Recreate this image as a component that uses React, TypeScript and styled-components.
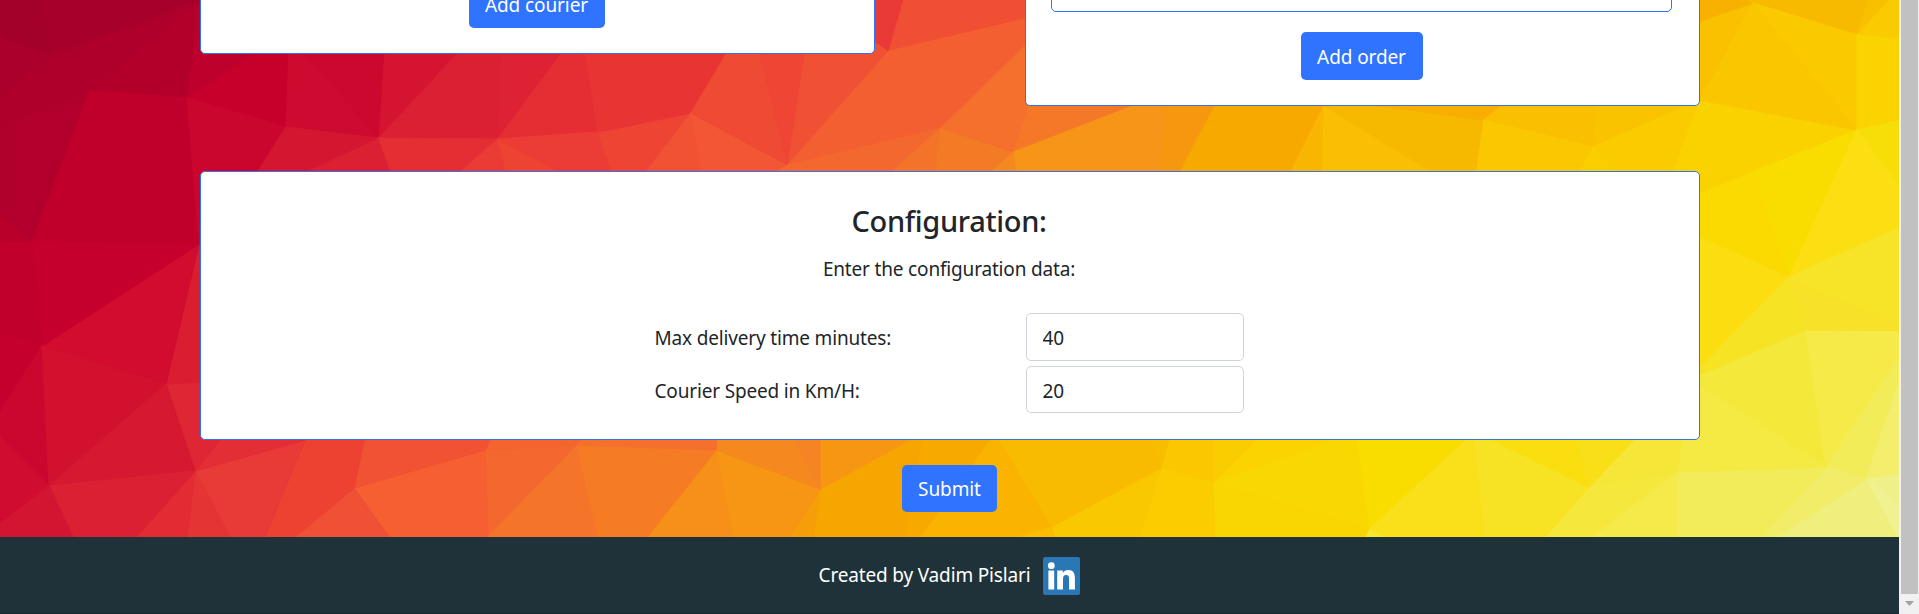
import React from "react";
import styled, { createGlobalStyle } from "styled-components";

const GlobalStyle = createGlobalStyle`
  *, *::before, *::after { box-sizing: border-box; }
  body {
    margin: 0;
    font-family: "Noto Sans", sans-serif;
    font-size: 19px;
    line-height: 30px;
    color: #212529;
    overflow: hidden;
  }
`;

/* Low-poly backdrop: one entry per facet, colour and outline. */
const facets: [string, string][] = [
  ["#a3002a", "0,0 43,0 51,56 0,37"],
  ["#a7002b", "43,0 204,0 200,2 51,56"],
  ["#ab002c", "0,37 51,56 0,97"],
  ["#af002b", "0,97 51,56 200,2 90,91 0,125"],
  ["#b3002b", "90,91 200,2 204,0 194,54 187,98"],
  ["#b0002b", "0,125 90,91 32,242 0,215"],
  ["#b8002b", "0,215 32,242 0,243"],
  ["#c0002b", "90,91 187,98 199,244 32,242"],
  ["#be002c", "187,98 194,54 200,0 340,0 255,54"],
  ["#c6002b", "187,98 255,54 290,30 289,54 286,127"],
  ["#ca062f", "187,98 286,127 259,171 259,250 199,244"],
  ["#cd0a2f", "289,50 306,50 306,54 379,138 286,127"],
  ["#cb082d", "306,50 385,50 379,138 306,54"],
  ["#d51631", "286,127 379,138 304,171 300,176 255,176"],
  ["#dc2033", "379,138 392,176 300,176"],
  ["#d41430", "379,138 385,50 461,50"],
  ["#dc2033", "379,138 461,50 502,50 498,139"],
  ["#de2234", "498,139 502,50 564,50"],
  ["#e42e34", "379,138 498,139 456,176 392,176"],
  ["#e42e34", "498,139 564,50 585,50 598,132"],
  ["#eb3b35", "498,139 507,176 456,176"],
  ["#ed4332", "498,139 507,176 568,176"],
  ["#eb3d35", "498,139 598,132 613,176 568,176"],
  ["#ee4434", "598,132 691,113 643,176 613,176"],
  ["#e83534", "585,50 728.5,50 691,113 598,132"],
  ["#f15234", "691,113 643,176 702,176"],
  ["#f35634", "691,113 702,176 770,176 788,165"],
  ["#ee4a34", "691,113 728.5,50 759,50 788,165"],
  ["#ef4534", "759,50 805.6,50 788,165"],
  ["#f05033", "805.6,50 868,50 868,36 889,51 788,165"],
  ["#ea3a37", "868,36 889,51 904,0 868,0"],
  ["#f04f34", "904,0 1029,0 1029,18 889,51"],
  ["#f45f31", "889,51 1029,18 1029,42 941,128 788,165"],
  ["#f3682e", "788,165 941,128 887,176 770,176"],
  ["#f37329", "941,128 887,176 936,176"],
  ["#f47b26", "941,128 936,176 987,176 1014,152"],
  ["#f4702c", "941,128 1029,42 1029,106 1014,152"],
  ["#f57828", "1014,152 1029,106 1029,96 1159,96"],
  ["#f48a1f", "1014,152 987,176 1018,176"],
  ["#f69518", "1014,152 1159,96 1166,100 1160,176 1018,176"],
  ["#f5980f", "1166,100 1218,100 1178,176 1160,176"],
  ["#f7a900", "1218,100 1324,100 1324,106 1289,176 1178,176"],
  ["#f8b602", "1324,106 1289,176 1323,176"],
  ["#fabf03", "1324,106 1323,176 1439,176"],
  ["#f7b900", "1324,100 1340,100 1484,120 1476,176 1439,176 1324,106"],
  ["#f8ae00", "1378,106 1340,100 1510,100 1484,120"],
  ["#fabf00", "1484,120 1510,100 1597,100 1593,147"],
  ["#fac700", "1484,120 1593,147 1578,176 1476,176"],
  ["#f9c300", "1597,100 1700,100 1593,147"],
  ["#fbce00", "1593,147 1578,176 1621,176"],
  ["#facc00", "1593,147 1621,176 1672,176 1700,100"],
  ["#fad200", "1700,100 1672,176 1695,196 1857,130"],
  ["#f9c100", "1695,23 1753,3 1700,100 1695,100"],
  ["#f8b100", "1695,0 1747,0 1753,3 1695,23"],
  ["#f8ba00", "1747,0 1869,0 1857,35 1753,3"],
  ["#f9c000", "1869,0 1890,0 1857,35"],
  ["#facb00", "1890,0 1899,0 1899,39 1857,35"],
  ["#fac900", "1753,3 1857,35 1857,130"],
  ["#fac600", "1753,3 1857,130 1700,100"],
  ["#fbd300", "1857,35 1899,39 1899,121 1857,130"],
  ["#f8de08", "1857,130 1899,121 1899,186"],
  ["#fada00", "1695,196 1755,171 1789,277 1695,235"],
  ["#f9dd00", "1755,171 1857,130 1789,277"],
  ["#fbdf12", "1857,130 1899,186 1899,228 1789,277"],
  ["#fbdd10", "1695,235 1789,277 1695,373"],
  ["#f6e324", "1789,277 1806,331 1695,378 1695,373"],
  ["#f7e229", "1789,277 1899,323 1899,332 1806,331"],
  ["#f7e429", "1789,277 1899,228 1899,323"],
  ["#f4e83b", "1695,378 1806,331 1826,467 1695,383"],
  ["#f6ea49", "1806,331 1899,332 1899,358 1826,467"],
  ["#f3ec59", "1826,467 1899,358 1899,383 1866,479"],
  ["#f3ee6c", "1899,383 1899,475 1866,479"],
  ["#f0f08b", "1866,479 1899,475 1899,505"],
  ["#f0f191", "1866,479 1899,505 1899,537 1897,537"],
  ["#f0ef7d", "1866,479 1897,537 1777,537"],
  ["#f2ed69", "1826,467 1866,479 1777,537 1762,537"],
  ["#f3ec5a", "1677,472 1826,467 1762,537 1677,537"],
  ["#f5e943", "1695,383 1826,467 1677,472 1682,436"],
  ["#f6e637", "1637,436 1682,436 1677,472 1588,488"],
  ["#f6e73c", "1588,488 1677,472 1593,537 1545,537"],
  ["#f6e94a", "1677,472 1677,537 1593,537"],
  ["#f9df18", "1575,436 1637,436 1588,488"],
  ["#fbde10", "1482,436 1575,436 1588,488"],
  ["#f7e323", "1473,436 1482,436 1588,488 1545,537 1484,537"],
  ["#f9e01a", "1469,436 1473,436 1484,537 1382,537 1369,528"],
  ["#f7e52e", "1369,528 1382,537 1365,537"],
  ["#f9dd00", "1356,436 1469,436 1369,528"],
  ["#f9d700", "1339,436 1356,436 1369,528 1213,483"],
  ["#fad600", "1213,483 1369,528 1365,537 1215,537"],
  ["#fbd400", "1260,436 1343,436 1213,483"],
  ["#facd00", "1213,436 1260,436 1213,483"],
  ["#fbc700", "1170,436 1213,436 1213,483 1161,468"],
  ["#fbcd00", "1161,468 1213,483 1215,537 1139,537"],
  ["#fac800", "1051,527 1161,468 1139,537 1055,537"],
  ["#f9bd00", "1148,436 1170,436 1161,468"],
  ["#f9bb00", "996,436 1148,436 1161,468 1051,527"],
  ["#fab400", "992,436 996,436 1051,527 1018,537 920,537"],
  ["#fabd00", "1051,527 1055,537 1018,537"],
  ["#f8a900", "922,436 992,436 920,537 904,537"],
  ["#f7a500", "917,436 922,436 904,537 813,537 820,489"],
  ["#f79613", "820,436 917,436 820,489"],
  ["#f69e0a", "820,489 813,537 790,537"],
  ["#f79614", "716,450 820,489 790,537 732,537"],
  ["#f5891f", "717,436 792,436 820,489 716,450"],
  ["#f58424", "792,436 820,436 820,489"],
  ["#f69018", "716,450 732,537 647,537"],
  ["#f57c24", "576,445 716,450 647,537 597,537"],
  ["#f4702c", "583,436 717,436 716,450 576,445"],
  ["#f4742a", "576,445 597,537 487,537"],
  ["#f4682f", "485,450 576,445 488,535"],
  ["#f4642f", "492,436 583,436 576,445 485,450"],
  ["#f55f31", "354,488 485,450 488,537 389,537"],
  ["#f05233", "365,436 492,436 485,450 354,488"],
  ["#f05034", "354,488 389,537 295,537"],
  ["#ed4232", "307,436 365,436 354,488 295,537 265,537"],
  ["#e83a36", "195,471 305,440 265,537 230,537"],
  ["#e43534", "195,471 230,537 187,537"],
  ["#e22b33", "195,471 187,537 136,537"],
  ["#e32e35", "223,436 307,436 305,440 195,471"],
  ["#df2634", "166,384 204,382 223,436 195,471"],
  ["#da1e30", "199,244 204,244 204,382 166,384"],
  ["#d10c2f", "42,346 199,244 166,384"],
  ["#c6002c", "32,242 199,244 42,346"],
  ["#c1002b", "0,243 32,242 42,346 0,335"],
  ["#c6002d", "0,335 42,346 0,412"],
  ["#cb0730", "0,412 42,346 49,486 0,437"],
  ["#d1112e", "42,346 166,384 49,486"],
  ["#d61830", "49,486 166,384 195,471"],
  ["#dc2033", "49,486 195,471 136,537 73,537"],
  ["#d00c31", "0,437 49,486 0,524"],
  ["#d41532", "0,524 49,486 73,537 0,537"],
];

const Window = styled.div`
  display: flex;
  height: 614px;
  overflow: hidden;
`;

const Page = styled.div`
  flex: 1;
  display: flex;
  flex-direction: column;
`;

const Main = styled.main`
  position: relative;
  isolation: isolate;
  height: 537px;
  padding: 0 199px 0 200px;
  overflow: hidden;
  display: flex;
  flex-direction: column;
  background: linear-gradient(100deg, #b0002b, #e83534 30%, #f7a500 55%, #fad200 80%, #f6e94a);
`;

const Backdrop = styled.svg`
  position: absolute;
  inset: 0;
  z-index: -1;
`;

const CardRow = styled.div`
  display: flex;
  justify-content: space-between;
  align-items: flex-start;
  height: 231px;
  margin-top: -60px;
`;

const Card = styled.section<{ $height: number; $width?: number }>`
  flex: none;
  display: flex;
  flex-direction: column;
  align-items: center;
  width: ${(p) => (p.$width ? `${p.$width}px` : "100%")};
  height: ${(p) => p.$height}px;
  padding: 25px 27px 25px 25px;
  background: #fff;
  border: 1px solid #2f73f2;
  border-radius: 5px;
`;

const FormCard = styled(Card)`
  justify-content: flex-end;
  gap: 20px;
`;

const Button = styled.button<{ $width: number; $height?: number }>`
  flex: none;
  width: ${(p) => p.$width}px;
  height: ${(p) => p.$height ?? 48}px;
  padding: ${(p) => (p.$height ? 0 : 2)}px 0 0;
  border: 0;
  border-radius: 5px;
  background: #2f73ff;
  color: #fff;
  font: inherit;
  letter-spacing: -0.1px;
`;

const OrderInput = styled.input`
  flex: none;
  width: 100%;
  height: 48px;
  border: 1px solid #2f73f2;
  border-radius: 5px;
  background: #fff;
`;

const Title = styled.h2`
  margin: 6px 0 0;
  font-size: 29px;
  line-height: 36px;
  font-weight: 500;
  letter-spacing: -0.32px;
`;

const Lead = styled.p`
  margin: 15px 0 0;
  line-height: 30px;
  letter-spacing: -0.17px;
`;

const Fields = styled.div`
  display: grid;
  grid-template-columns: 371px 218px;
  row-gap: 5px;
  margin-top: 29px;
  align-items: center;
`;

const Label = styled.label`
  padding-top: 2px;
  line-height: 30px;
  letter-spacing: -0.17px;
`;

const NumberInput = styled.input<{ $height: number }>`
  width: 218px;
  height: ${(p) => p.$height}px;
  padding: 2px 16px 0;
  border: 1px solid #ced4da;
  border-radius: 5px;
  background: #fff;
  color: #212529;
  font: inherit;
`;

const SubmitRow = styled.div`
  display: flex;
  justify-content: center;
  padding: 25px 1px 0 0;
`;

const Footer = styled.footer`
  flex: 1;
  display: flex;
  justify-content: center;
  align-items: center;
  gap: 13px;
  background: #1f3239;
  border-bottom: 1px solid #172930;
  color: #fff;
`;

const Credit = styled.span`
  line-height: 30px;
  letter-spacing: -0.16px;
`;

const Logo = styled.svg`
  display: block;
  margin-top: 2px;
`;

const ScrollTrack = styled.div`
  display: flex;
  flex-direction: column;
  width: 20px;
  padding: 0 1px 0 2px;
  background: #f1f1f1;
`;

const ScrollThumb = styled.div`
  height: 594px;
  background: #c1c1c1;
`;

const ScrollArrow = styled.svg`
  display: block;
  width: 17px;
  height: 20px;
`;

function LinkedInLogo() {
  return (
    <Logo width="37" height="38" viewBox="0 0 37 38">
      <rect width="37" height="38" rx="2" fill="#2977b5" />
      <g fill="#fff">
        <circle cx="8.3" cy="8.7" r="3.4" />
        <rect x="5.4" y="13.5" width="5.8" height="19" />
        <path d="M14.2 13.5h5.6v2.6c1-1.8 2.9-3.1 5.4-3.1 5.2 0 6.7 3.4 6.7 8.3v11.2h-5.8v-9.8c0-2.4-.3-4.6-2.9-4.6-2.6 0-3.2 2-3.2 4.6v9.8h-5.8z" />
      </g>
    </Logo>
  );
}

export default function App() {
  return (
    <>
      <GlobalStyle />
      <Window>
        <Page>
          <Main>
            <Backdrop width="1899" height="537" viewBox="0 0 1899 537">
              {facets.map(([color, points], i) => (
                <polygon key={i} points={points} fill={color} stroke={color} strokeWidth="1.2" />
              ))}
            </Backdrop>
            <CardRow>
              <FormCard $width={675} $height={114}>
                <Button $width={136}>Add courier</Button>
              </FormCard>
              <FormCard $width={675} $height={166}>
                <OrderInput aria-label="Order" />
                <Button $width={122}>Add order</Button>
              </FormCard>
            </CardRow>
            <Card $height={269}>
              <Title>Configuration:</Title>
              <Lead>Enter the configuration data:</Lead>
              <Fields>
                <Label htmlFor="time">Max delivery time minutes:</Label>
                <NumberInput id="time" $height={48} defaultValue="40" />
                <Label htmlFor="speed">Courier Speed in Km/H:</Label>
                <NumberInput id="speed" $height={47} defaultValue="20" />
              </Fields>
            </Card>
            <SubmitRow>
              <Button $width={95} $height={47}>Submit</Button>
            </SubmitRow>
          </Main>
          <Footer>
            <Credit>Created by Vadim Pislari</Credit>
            <LinkedInLogo />
          </Footer>
        </Page>
        <ScrollTrack>
          <ScrollThumb />
          <ScrollArrow viewBox="0 0 17 20">
            <path d="M4 7h9l-4.5 5z" fill="#a3a3a3" />
          </ScrollArrow>
        </ScrollTrack>
      </Window>
    </>
  );
}
